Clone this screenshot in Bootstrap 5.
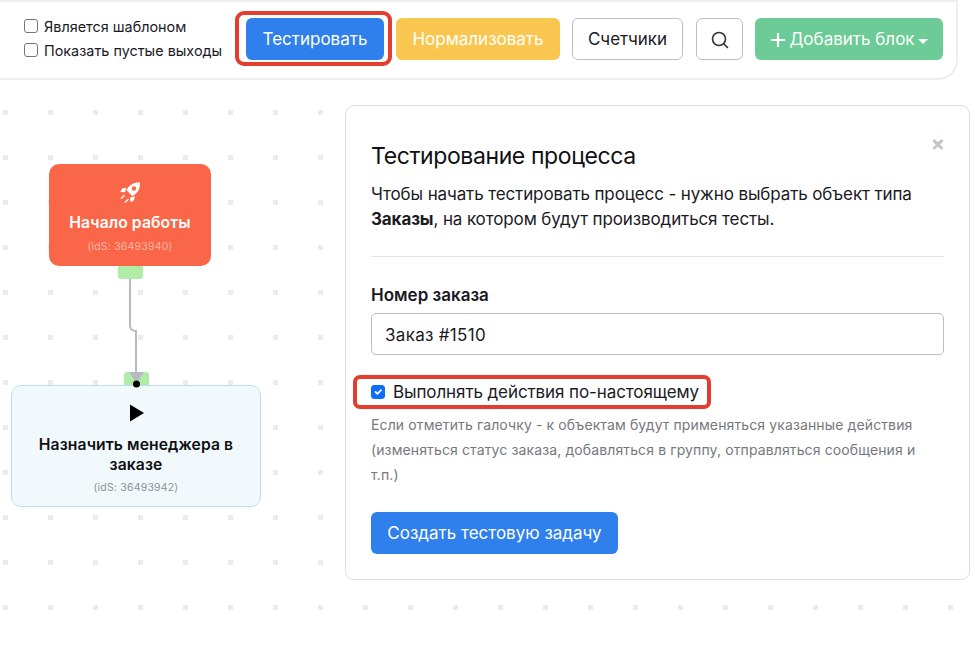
<!doctype html>
<html lang="ru"><head><meta charset="utf-8">
<link href="https://cdn.jsdelivr.net/npm/bootstrap@5.3.0/dist/css/bootstrap.min.css" rel="stylesheet">
<style>
html,body{height:650px;overflow:hidden;background:#fff}
body{font-family:Inter,"Noto Sans",sans-serif;color:#1a1a1f;font-size:17px}
.topstrip{width:958px;height:80px;border:2px solid #eee;border-left:0;border-bottom-right-radius:20px;padding:0 0 2px 24px;background:#fff;position:relative;z-index:2}
.checks{width:211px;font-size:14.4px;line-height:24px;margin-top:-1px}
.checks .form-check{min-height:0;margin:0;padding-left:20px}
.checks .form-check-input{width:14px;height:14px;margin-left:-20px;margin-top:4px;border-color:#767676;border-radius:3px}
.redbox{width:157px;height:55px;border:4px solid #e43d30;border-radius:9px;padding:3px 0 0 7px;margin-top:-1px}
.tbtn{height:42px;font-size:17px;border-radius:6px;display:inline-flex;align-items:center;justify-content:center;padding:2px 0 0;border:1px solid transparent}
.b-test{width:138px;background:#2f80ed;color:#fff}
.b-norm{width:164px;background:#f9c74f;color:#fff;margin:0 12px 0 4px}
.b-count{width:111px;background:#fff;border-color:#bdbdc9;color:#1a1a1f}
.b-search{width:47px;background:#fff;border-color:#bdbdc9;margin-left:13px}
.b-add{width:188px;background:#6ccb97;color:#fff;gap:3px;margin-left:12px}
.b-add::after{content:"";border-top:5px solid #fff;border-left:5px solid transparent;border-right:5px solid transparent;margin-top:2px}
.field{position:relative;height:570px;padding-top:25px}
.dotlayer{position:absolute;left:0;top:-80px;width:978px;height:650px}
.panel{position:relative;margin:0 0 0 345px;width:625px;height:475px;border:1px solid #dedede;border-radius:9px;background:#fff;padding:25px 25px 0 25px}
.ttl{font-size:23px;line-height:32px;margin:9px 0 0;font-weight:400;letter-spacing:-.4px;color:#101014}
.xclose{color:#c4c4c4;font-size:21px;font-weight:700;line-height:20px;border:0;background:none;padding:0;margin:3px -1px 0 0}
.intro{font-size:17px;line-height:25px;margin:10px 0 0;letter-spacing:-.12px}
.sep{margin:24px 0 26px;border-color:#e4e4e4;opacity:1}
.flabel{font-weight:600;font-size:17px;line-height:24px;margin-bottom:6px}
.finput{height:42px;border-color:#bdbdc9;border-radius:5px;font-size:17px;padding:1px 13px 0;color:#1a1a1f;letter-spacing:.3px}
.redcheck{border:4px solid #e43d30;border-radius:7px;margin:20px 0 0 -18px;width:358px;height:34px;padding-left:14px;display:flex;align-items:center}
.redcheck .form-check-input{width:14px;height:14px;margin:0 8px 0 0;border-radius:3px;background-color:#0d6efd;border-color:#0d6efd}
.redcheck label{font-size:17px;letter-spacing:-.1px;white-space:nowrap;padding-top:1px}
.helptxt{font-size:14px;line-height:25px;color:#77777c;margin:3px 0 0;letter-spacing:.12px;padding-right:10px}
.b-create{width:247px;background:#2f80ed;color:#fff;margin-top:25px}
.wnode{position:absolute;text-align:center}
.n-start{left:49px;top:84px;width:162px;height:102px;background:#f96748;border-radius:10px;color:#fff;padding-top:15px}
.n-task{left:11px;top:305px;width:250px;height:122px;background:#f1f9fc;border:1px solid #bcdfe9;border-radius:10px;color:#101014;padding:14px 20px 0}
.ntitle{font-weight:600;font-size:15.7px;line-height:20px;letter-spacing:.1px}
.nid{font-size:10.5px;line-height:14px;letter-spacing:.2px}
.n-start .nid{color:#fbb5a5}
.n-task .nid{color:#8c9296}
.gport{position:absolute;width:25px;height:13px;background:#b0eca5}
.p-out{left:118px;top:186px;border-radius:0 0 3px 3px}
.p-in{left:124px;top:292px;border-radius:3px 3px 0 0}
.wire{position:absolute;left:0;top:0;pointer-events:none}
</style></head><body>
<div class="topstrip d-flex align-items-center">
  <div class="checks">
    <div class="form-check"><input class="form-check-input" type="checkbox" id="c1"><label class="form-check-label" for="c1">Является шаблоном</label></div>
    <div class="form-check"><input class="form-check-input" type="checkbox" id="c2"><label class="form-check-label" for="c2">Показать пустые выходы</label></div>
  </div>
  <div class="redbox"><button class="btn tbtn b-test">Тестировать</button></div>
  <button class="btn tbtn b-norm">Нормализовать</button>
  <button class="btn tbtn b-count">Счетчики</button>
  <button class="btn tbtn b-search" aria-label="Поиск"><svg width="18" height="18" viewBox="0 0 18 18" fill="none" stroke="#333" stroke-width="1.6"><circle cx="8" cy="8" r="6.500"/><path d="M13 13 16.500 16.500" stroke-linecap="round"/></svg></button>
  <button class="btn tbtn b-add"><svg width="16" height="16" viewBox="0 0 16 16" stroke="#fff" stroke-width="2.2"><path d="M8 1v14M1 8h14"/></svg><span>Добавить блок</span></button>
</div>
<div class="field">
  <svg class="dotlayer" aria-hidden="true"><defs><pattern id="dp" x="3" y="20" width="45" height="45" patternUnits="userSpaceOnUse"><rect width="5" height="5" fill="#ebebeb"/></pattern></defs><rect width="978" height="650" fill="url(#dp)"/></svg>
  <svg class="wire" width="300" height="320" aria-hidden="true"><path d="M130 199V245q0 6 6 6V293" fill="none" stroke="#b9b9c6" stroke-width="2"/></svg>
  <div class="gport p-out"></div><div class="gport p-in"></div>
  <div class="wnode n-start">
    <svg width="22" height="23" viewBox="0 0 22 22" fill="#fff"><path d="M21 1c-5-.4-8.600 1.200-11.200 4.300L7.300 8.600l6.100 6.100 3.300-2.500C19.800 9.600 21.400 6 21 1zM15 4.800a2.200 2.200 0 1 1 0 4.400 2.200 2.200 0 0 1 0-4.400z"/><path d="M7.300 6 3.200 7 1.200 10.500l4.800.3zM16 14.700l-1 4.100-3.500 2-.3-4.800zM5 13l-3.500 3.500 1 1 3.500-3.500zM9 17l-3.500 3.500 1 1L10 18z"/></svg>
    <div class="ntitle" style="margin-top:8px">Начало работы</div>
    <div class="nid" style="margin-top:7px">(idS: 36493940)</div>
  </div>
  <div class="wnode n-task">
    <svg width="16" height="18" viewBox="0 0 16 18" fill="#000"><path d="M2 0.500 16 9 2 17.500z"/></svg>
    <div class="ntitle" style="margin-top:9px">Назначить менеджера в заказе</div>
    <div class="nid" style="margin-top:6px">(idS: 36493942)</div>
  </div>
  <svg class="wire" width="300" height="320" aria-hidden="true"><path d="M129 292h15l-7.500 11z" fill="#b9b9c6"/><circle cx="136.500" cy="304" r="3.500" fill="#000"/></svg>
  <div class="panel card">
    <div class="d-flex justify-content-between align-items-start">
      <h4 class="ttl">Тестирование процесса</h4>
      <button class="xclose" aria-label="Закрыть">×</button>
    </div>
    <p class="intro">Чтобы начать тестировать процесс - нужно выбрать объект типа <b class="fw-bold">Заказы</b>, на котором будут производиться тесты.</p>
    <hr class="sep">
    <label class="form-label flabel d-block" for="ord">Номер заказа</label>
    <input class="form-control finput" id="ord" value="Заказ #1510">
    <div class="redcheck"><input class="form-check-input" type="checkbox" id="real" checked><label for="real">Выполнять действия по-настоящему</label></div>
    <p class="helptxt">Если отметить галочку - к объектам будут применяться указанные действия (изменяться статус заказа, добавляться в группу, отправляться сообщения и т.п.)</p>
    <button class="btn tbtn b-create">Создать тестовую задачу</button>
  </div>
</div>
</body></html>
